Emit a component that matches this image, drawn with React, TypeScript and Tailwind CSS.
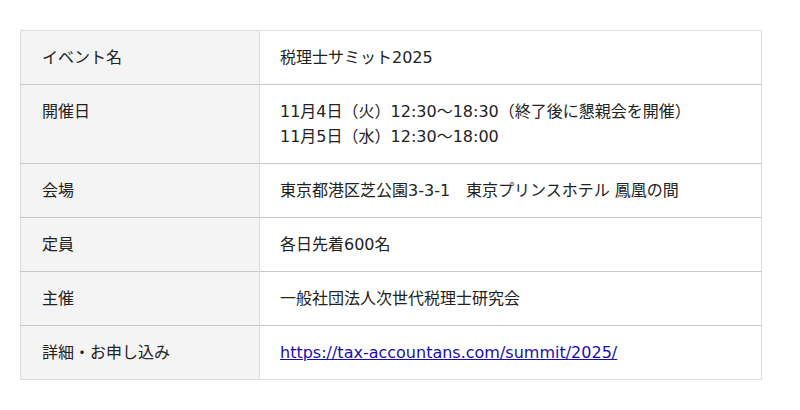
const rows: { label: string; value: React.ReactNode }[] = [
  { label: "イベント名", value: "税理士サミット2025" },
  {
    label: "開催日",
    value: (
      <>
        11月4日（火）12:30〜18:30（終了後に懇親会を開催）
        <br />
        11月5日（水）12:30〜18:00
      </>
    ),
  },
  { label: "会場", value: "東京都港区芝公園3-3-1　東京プリンスホテル 鳳凰の間" },
  { label: "定員", value: "各日先着600名" },
  { label: "主催", value: "一般社団法人次世代税理士研究会" },
  {
    label: "詳細・お申し込み",
    value: (
      <a href="#" className="text-[#1a0dab] underline">
        https://tax-accountans.com/summit/2025/
      </a>
    ),
  },
];

export default function App() {
  return (
    <div className="w-[800px] h-[410px] bg-white pt-[30px] px-5 font-['DejaVu_Sans','Noto_Sans_CJK_JP',sans-serif] text-[16px] text-[#222]">
      <table className="w-[742px] border-collapse border border-[#ddd]">
        <tbody>
          {rows.map((r) => (
            <tr key={r.label} className="border-b border-[#c8c8c8] last:border-b-[#ddd]">
              <th className="w-[239px] bg-[#f4f4f4] border-r border-[#ddd] text-left font-normal align-top pl-[21px] pr-4 py-[14px] leading-[25px]">
                {r.label}
              </th>
              <td className="align-top pl-5 pr-4 py-[14px] leading-[25px]">{r.value}</td>
            </tr>
          ))}
        </tbody>
      </table>
    </div>
  );
}
